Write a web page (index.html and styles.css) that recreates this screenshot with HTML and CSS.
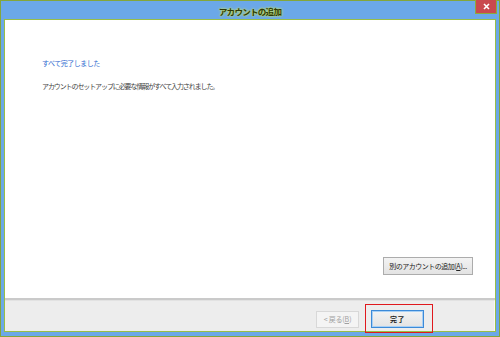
FILE: index.html
```html
<!DOCTYPE html>
<html lang="ja">
<head>
<meta charset="utf-8">
<title>アカウントの追加</title>
<link rel="stylesheet" href="styles.css">
</head>
<body>
<div class="window">
  <div class="titlebar">
    <div class="title">アカウントの追加</div>
    <div class="close">
      <svg width="7" height="7" viewBox="0 0 7 7"><path d="M1 1L6 6M6 1L1 6" stroke="#fff" stroke-width="1.6"/></svg>
    </div>
  </div>
  <div class="panel">
    <div class="content">
      <div class="heading">すべて完了しました</div>
      <div class="message">アカウントのセットアップに必要な情報がすべて入力されました。</div>
      <div class="spacer"></div>
      <div class="addrow">
        <button class="btn add">別のアカウントの追加(<u>A</u>)...</button>
      </div>
    </div>
    <div class="footer">
      <button class="btn back" disabled>&lt; 戻る(<u>B</u>)</button>
      <button class="btn finish">完了</button>
      <div class="highlight"></div>
    </div>
  </div>
</div>
</body>
</html>
```
FILE: styles.css
```css
html, body {
  margin: 0;
  padding: 0;
}
body {
  width: 500px;
  height: 337px;
  overflow: hidden;
  font-family: "Noto Sans CJK JP", "Noto Sans", sans-serif;
}
.window {
  box-sizing: border-box;
  width: 500px;
  height: 337px;
  background: #6ba8e8;
  border: 1px solid #84a63a;
  display: flex;
  flex-direction: column;
}
.titlebar {
  height: 18px;
  position: relative;
  display: flex;
  align-items: center;
  justify-content: center;
}
.title {
  font-size: 8.5px;
  font-weight: bold;
  color: #2c380a;
  letter-spacing: -0.7px;
  text-shadow: 0 0 1px #b9d85e, 0 0 2px #b9d85e, 0 0 3px #c9e27a;
  line-height: 18px;
  margin-top: 2px;
}
.close {
  position: absolute;
  top: -1px;
  right: 2px;
  width: 20px;
  height: 13px;
  background: #c9494e;
  border: 1px solid #8eaa3c;
  border-top: none;
  display: flex;
  align-items: center;
  justify-content: center;
}
.panel {
  flex: 1;
  margin: 0 3px 4px 3px;
  border: 1px solid #98be48;
  display: flex;
  flex-direction: column;
  background: #fff;
}
.content {
  flex: 1;
  display: flex;
  flex-direction: column;
  padding: 38px 22px 23px 37px;
  border-bottom: 2px solid #cacaca;
}
.heading {
  font-size: 7px;
  color: #2f6ad0;
  letter-spacing: -0.5px;
  line-height: 10px;
}
.message {
  margin-top: 13px;
  font-size: 7px;
  color: #444;
  letter-spacing: -1.1px;
  line-height: 10px;
}
.spacer {
  flex: 1;
}
.addrow {
  display: flex;
  justify-content: flex-end;
}
.btn {
  font-family: "Noto Sans CJK JP", "Noto Sans", sans-serif;
  font-size: 7px;
  letter-spacing: -0.5px;
  color: #222;
  height: 18px;
  padding: 0;
  background: linear-gradient(#f3f3f3, #e3e3e3);
  border: 1px solid #acacac;
  border-radius: 0;
  line-height: 16px;
  white-space: nowrap;
}
.btn u {
  text-decoration: underline;
  letter-spacing: 0;
}
.add {
  width: 90px;
}
.footer {
  height: 31px;
  background: #ededed;
  border-top: 1px solid #e2e2e2;
  border-right: 1px solid #f8f8f8;
  display: flex;
  justify-content: flex-end;
  align-items: flex-start;
  padding: 9px 70px 0 0;
  box-sizing: border-box;
  position: relative;
}
.back {
  width: 43px;
  color: #a0a0a0;
  border-color: #d8d8d8;
  background: #f4f4f4;
  margin-right: 12px;
  margin-top: 1px;
  height: 17px;
  line-height: 15px;
  letter-spacing: -0.2px;
}
.finish {
  width: 53px;
  border: 1px solid #3c8ad8;
  box-shadow: inset 0 0 0 1px #a8d0f5;
  font-weight: bold;
  letter-spacing: 0.5px;
}
.highlight {
  position: absolute;
  left: 360px;
  top: 3px;
  width: 66px;
  height: 27px;
  border: 1px solid #e0191e;
}
```
